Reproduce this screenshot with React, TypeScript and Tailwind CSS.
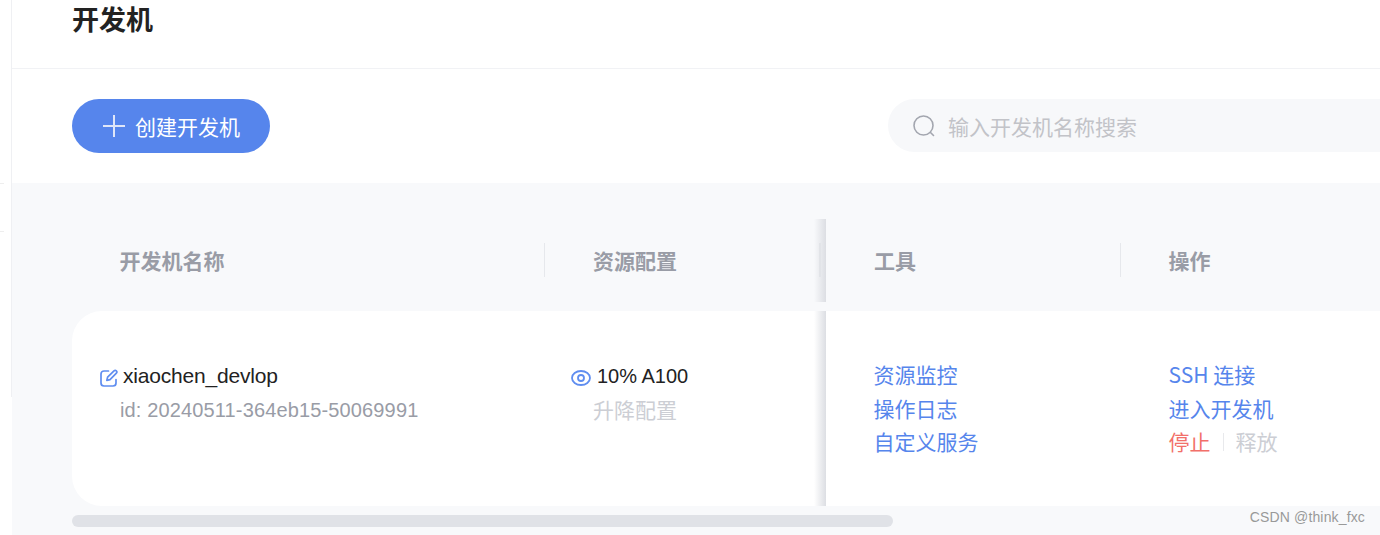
import React from "react";

function EditIcon() {
  return (
    <svg className="translate-y-[2px]" width="18" height="18" viewBox="0 0 18 18" fill="none" stroke="#5f8df0" strokeWidth="1.7" strokeLinecap="round" strokeLinejoin="round">
      <path d="M8.5 2H4a3 3 0 0 0-3 3v9a3 3 0 0 0 3 3h9a3 3 0 0 0 3-3v-3.5" />
      <path d="M14 1.8a1.7 1.7 0 0 1 2.4 2.4L10 10.6l-3.2.8.8-3.2z" />
    </svg>
  );
}

function EyeIcon() {
  return (
    <svg className="translate-y-[2px]" width="20" height="16" viewBox="0 0 20 16" fill="none" stroke="#5f8df0" strokeWidth="1.8">
      <ellipse cx="10" cy="8" rx="9" ry="7" />
      <circle cx="10" cy="8" r="3" />
    </svg>
  );
}

function HeaderCell({ label, divider, shadow, x }: { label: string; divider?: boolean; shadow?: boolean; x: string }) {
  return (
    <div className={`relative flex h-full items-center ${x}`}>
      {divider && <div className="absolute left-0 top-[24px] h-[34px] w-px bg-[#e6e8ec]" />}
      <span className="text-[21px] font-bold text-[#999ca6]">{label}</span>
      {shadow && (
        <>
          <div className="absolute right-0 top-0 h-full w-[12px] bg-gradient-to-r from-transparent to-[#dcdee3]" />
          <div className="absolute right-[5px] top-[24px] h-[34px] w-[2px] bg-[#e2e4e8]" />
        </>
      )}
    </div>
  );
}

export default function App() {
  return (
    <div className="relative flex h-[535px] w-[1380px] overflow-hidden bg-white font-['Noto_Sans_CJK_SC','Noto_Sans',sans-serif]">
      {/* left edge of the sidebar */}
      <div className="h-[397px] w-[12px] shrink-0 border-r border-[#eff0f3] pt-[183px]">
        <div className="h-px w-[4px] bg-[#eeeeee]" />
        <div className="mt-[47px] h-px w-[4px] bg-[#eeeeee]" />
      </div>

      <div className="flex min-w-0 flex-1 flex-col">
        <div className="flex h-[69px] shrink-0 items-start border-b border-[#f1f2f5] pl-[60px]">
          <h1 className="text-[27px] font-bold leading-[38px] text-[#222]">开发机</h1>
        </div>

        <div className="flex h-[114px] shrink-0 items-start justify-between pl-[60px] pt-[30px]">
          <button className="flex h-[54px] w-[198px] items-center rounded-full bg-[#5685ec] pl-[31px] text-[21px] text-white">
            <svg width="22" height="22" viewBox="0 0 22 22" stroke="#dfe6f8" strokeWidth="2">
              <path d="M0 11h22M11 0v22" />
            </svg>
            <span className="ml-[10px] translate-y-[1px]">创建开发机</span>
          </button>
          <div className="flex h-[53px] w-[492px] items-center rounded-l-[27px] bg-[#f7f8fa] pl-[25px]">
            <svg width="22" height="22" viewBox="0 0 22 22" fill="none" stroke="#a3a6af" strokeWidth="1.6" strokeLinecap="round">
              <circle cx="10.5" cy="10.5" r="9.5" />
              <path d="M17.5 17.5l3 3" />
            </svg>
            <span className="ml-[13px] translate-y-[1px] text-[21px] text-[#c2c3c8]">输入开发机名称搜索</span>
          </div>
        </div>

        <div className="flex flex-1 flex-col bg-[#f8f9fb] pl-[60px] pt-[36px]">
          <div className="grid h-[83px] shrink-0 grid-cols-[472px_282px_294px_260px]">
            <HeaderCell label="开发机名称" x="pl-[47.5px]" />
            <HeaderCell label="资源配置" x="pl-[49px]" divider shadow />
            <HeaderCell label="工具" x="pl-[48px]" />
            <HeaderCell label="操作" x="pl-[48.5px]" divider />
          </div>

          <div className="mt-[9px] grid h-[195px] shrink-0 grid-cols-[472px_282px_294px_260px] text-[21px] leading-[33.5px]">
            <div className="rounded-l-[30px] bg-white pl-[28px] pt-[48px]">
              <div className="flex items-center">
                <EditIcon />
                <span className="ml-[5px] font-['Liberation_Sans',sans-serif] tracking-[-0.2px] text-[#222]">xiaochen_devlop</span>
              </div>
              <div className="pl-[20px] pt-[1px] font-['Liberation_Sans',sans-serif] text-[20px] tracking-[0.14px] text-[#999ca6]">id: 20240511-364eb15-50069991</div>
            </div>

            <div className="relative bg-white pl-[27px] pt-[48px]">
              <div className="flex items-center">
                <EyeIcon />
                <span className="ml-[6px] translate-y-[1px] font-['Liberation_Sans',sans-serif] text-[20px] text-[#222]">10% A100</span>
              </div>
              <div className="pl-[22px] text-[#ccced4]">升降配置</div>
              <div className="absolute right-0 top-0 h-full w-[12px] bg-gradient-to-r from-transparent to-[#dcdee3]" />
            </div>

            <div className="bg-white pl-[47.5px] pt-[47px] text-[#5685ec]">
              <div>资源监控</div>
              <div>操作日志</div>
              <div>自定义服务</div>
            </div>

            <div className="bg-white pl-[48.5px] pt-[47px] text-[#5685ec]">
              <div>SSH 连接</div>
              <div>进入开发机</div>
              <div className="flex items-center">
                <span className="text-[#f2706a]">停止</span>
                <span className="mx-[12px] h-[18px] w-px bg-[#e8e9ec]" />
                <span className="text-[#ccced4]">释放</span>
              </div>
            </div>
          </div>

          <div className="mt-[9px] h-[12px] w-[821px] shrink-0 rounded-full bg-[#e0e2e7]" />
        </div>
      </div>

      <span className="absolute bottom-[7px] right-[15px] font-['Liberation_Sans',sans-serif] text-[14px] tracking-[0.15px] text-[#999]">CSDN @think_fxc</span>
    </div>
  );
}
